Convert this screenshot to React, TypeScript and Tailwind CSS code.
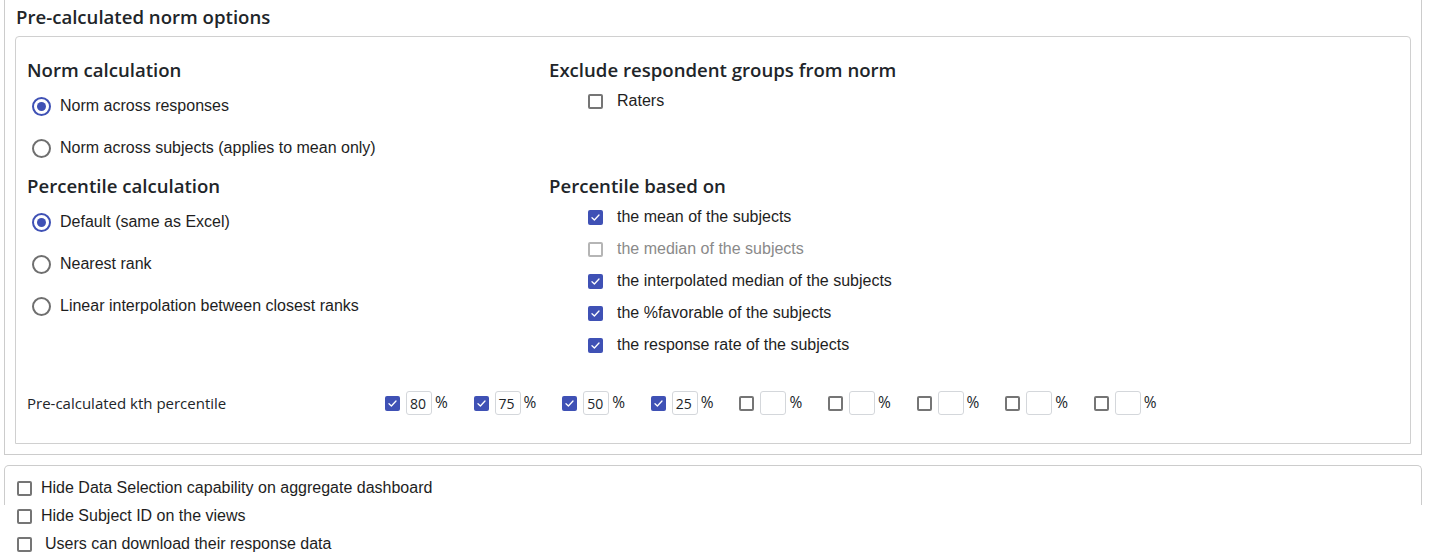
import React from "react";

const ARIAL = "font-['Liberation_Sans',Arial,sans-serif]";
const SEGOE = "font-['Open_Sans','Noto_Sans',sans-serif]";

function Check({ checked, muted }: { checked?: boolean; muted?: boolean }) {
  if (checked) {
    return (
      <span className="inline-flex h-[15px] w-[15px] shrink-0 items-center justify-center rounded-[2px] bg-[#3f51b5]">
        <svg width="11" height="11" viewBox="0 0 11 11" fill="none">
          <path d="M2 5.8 L4.4 8 L9 3" stroke="white" strokeWidth="1.3" strokeLinecap="round" strokeLinejoin="round" />
        </svg>
      </span>
    );
  }
  return (
    <span
      className={
        "inline-block h-[15px] w-[15px] shrink-0 rounded-[2px] border-2 " +
        (muted ? "border-[#b5b5b5]" : "border-[#757575]")
      }
    />
  );
}

function Radio({ checked }: { checked?: boolean }) {
  return checked ? (
    <span className="inline-flex h-[19px] w-[19px] shrink-0 items-center justify-center rounded-full border-2 border-[#3f51b5]">
      <span className="h-[9px] w-[9px] rounded-full bg-[#3f51b5]" />
    </span>
  ) : (
    <span className="inline-block h-[19px] w-[19px] shrink-0 rounded-full border-2 border-[#6f6f6f]" />
  );
}

function RadioRow({ label, checked }: { label: string; checked?: boolean }) {
  return (
    <div className="flex h-[42px] items-center pl-[5px]">
      <Radio checked={checked} />
      <span className={`ml-[9px] text-[16px] text-[#1e1e1e] ${ARIAL}`}>{label}</span>
    </div>
  );
}

function CheckRow({ label, checked, muted }: { label: string; checked?: boolean; muted?: boolean }) {
  return (
    <div className="flex h-[32px] items-center pl-[39px]">
      <Check checked={checked} muted={muted} />
      <span className={`ml-[14px] text-[16px] ${muted ? "text-[#8a8a8a]" : "text-[#1e1e1e]"} ${ARIAL}`}>{label}</span>
    </div>
  );
}

function Heading({ children }: { children: React.ReactNode }) {
  return (
    <div className={`h-[24px] text-[18.6px] font-semibold leading-[24px] text-[#212529] ${SEGOE}`}>{children}</div>
  );
}

function Pct({ value }: { value?: string }) {
  const checked = !!value;
  return (
    <div className="flex w-[88.6px] items-center">
      <Check checked={checked} />
      <div
        className={`ml-[6px] flex h-[24px] w-[26px] items-center rounded-[3px] border border-[#d4d7db] pl-[3px] text-[14px] text-[#212529] ${SEGOE}`}
      >
        {value}
      </div>
      <span className={`ml-[3px] text-[15.5px] text-[#212529] ${SEGOE}`}>%</span>
    </div>
  );
}

function BottomRow({ label, extra }: { label: string; extra?: boolean }) {
  return (
    <div className="flex h-[28px] items-center pl-[12px]">
      <Check />
      <span className={`${extra ? "ml-[13px]" : "ml-[9px]"} text-[16px] text-[#1e1e1e] ${ARIAL}`}>{label}</span>
    </div>
  );
}

export default function App() {
  return (
    <div className="h-[558px] w-[1441px] overflow-hidden bg-white">
      <div className="ml-[4px] w-[1418px] border-x border-b border-[#cccccc] pb-[10px]">
        <div className={`h-[36px] pl-[11px] pt-[5px] text-[18.6px] font-semibold leading-[24px] text-[#212529] ${SEGOE}`}>
          Pre-calculated norm options
        </div>
        <div className="ml-[10px] h-[408px] w-[1396px] rounded-t-[4px] border border-[#d0d0d0] pl-[11px] pt-[21px]">
          <div className="grid grid-cols-[522px_1fr]">
            <div className="h-[116px]">
              <Heading>Norm calculation</Heading>
              <div className="mt-[3px]">
                <RadioRow label="Norm across responses" checked />
                <RadioRow label="Norm across subjects (applies to mean only)" />
              </div>
            </div>
            <div className="h-[116px]">
              <Heading>Exclude respondent groups from norm</Heading>
              <div className="mt-[3px]">
                <CheckRow label="Raters" />
              </div>
            </div>
            <div>
              <Heading>Percentile calculation</Heading>
              <div className="mt-[3px]">
                <RadioRow label="Default (same as Excel)" checked />
                <RadioRow label="Nearest rank" />
                <RadioRow label="Linear interpolation between closest ranks" />
              </div>
            </div>
            <div>
              <Heading>Percentile based on</Heading>
              <div className="mt-[3px]">
                <CheckRow label="the mean of the subjects" checked />
                <CheckRow label="the median of the subjects" muted />
                <CheckRow label="the interpolated median of the subjects" checked />
                <CheckRow label="the %favorable of the subjects" checked />
                <CheckRow label="the response rate of the subjects" checked />
              </div>
            </div>
          </div>
          <div className="mt-[30px] flex h-[24px] items-center">
            <div className={`w-[358px] text-[15px] text-[#212529] ${SEGOE}`}>Pre-calculated kth percentile</div>
            <Pct value="80" />
            <Pct value="75" />
            <Pct value="50" />
            <Pct value="25" />
            <Pct />
            <Pct />
            <Pct />
            <Pct />
            <Pct />
          </div>
        </div>
      </div>
      <div className="ml-[4px] mt-[10px] h-[40px] w-[1418px] rounded-t-[5px] border-x border-t border-[#cccccc] pt-[8px]">
        <BottomRow label="Hide Data Selection capability on aggregate dashboard" />
        <BottomRow label="Hide Subject ID on the views" />
        <BottomRow label="Users can download their response data" extra />
      </div>
    </div>
  );
}
